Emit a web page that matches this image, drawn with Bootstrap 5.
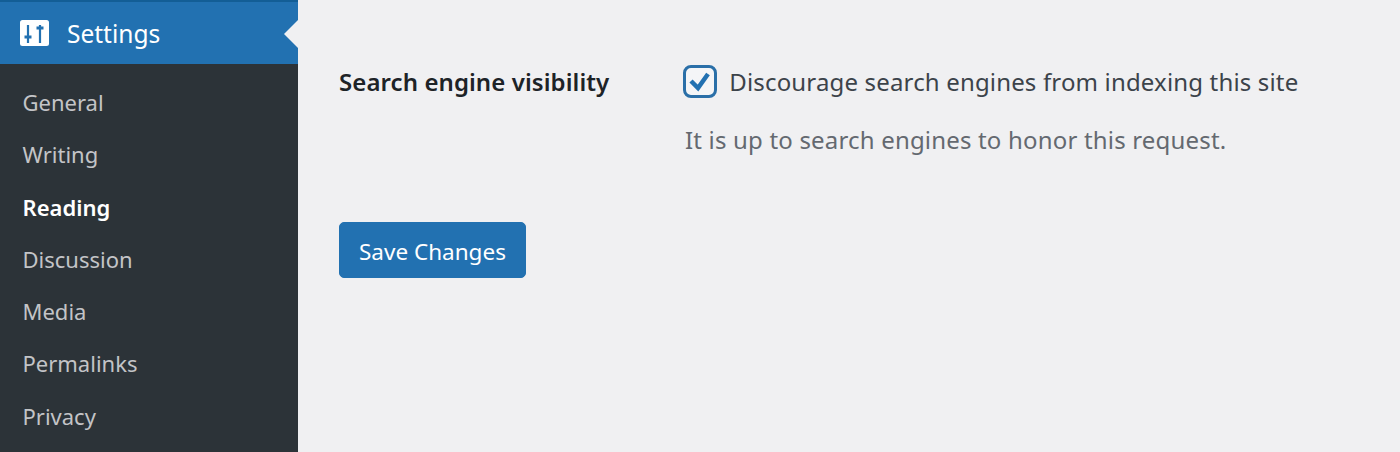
<!DOCTYPE html>
<html lang="en"><head><meta charset="utf-8"><title>Reading Settings</title>
<link href="https://cdn.jsdelivr.net/npm/bootstrap@5.3.0/dist/css/bootstrap.min.css" rel="stylesheet">
<style>
html,body{height:452px;overflow:hidden;margin:0}
body{background:#f0f0f2;font-family:"Noto Sans","Open Sans",sans-serif;color:#1d2327}
.wp-shell{height:452px}
.wp-side{width:298px;background:#2c3338;flex:none}
.wp-head{height:64px;background:#2271b1;border-top:2px solid #135e96;color:#fff;font-size:24.5px;padding:2px 0 0 20px;gap:18px;position:relative}
.wp-head svg{margin-top:-2px}
.wp-head::after{content:"";position:absolute;right:0;top:18px;border:14px solid transparent;border-left:0;border-right-color:#f0f0f2}
.wp-link{display:block;color:#c3c4c7;font-size:22px;line-height:32px;height:52.3px;padding:0 0 0 22.5px;text-decoration:none}
.wp-link.sel{color:#fff;font-weight:600}
.wp-menu{padding-top:22px}
.wp-main{padding:66px 0 0 41px}
.wp-label{width:344px;font-size:24px;font-weight:600;line-height:32px;letter-spacing:.08px}
.wp-check{width:33.5px;height:33px;border:3.5px solid #2a6fa8;border-radius:8px;background:#f4f5f7;flex:none;margin-top:-1px}
.wp-opt{font-size:24px;line-height:32px;gap:12.8px;letter-spacing:.16px;color:#3c434a}
.wp-desc{font-size:24px;line-height:32px;color:#646970;margin-top:26px;letter-spacing:.18px;padding-left:2px}
.wp-save{margin-top:66px;background:#2271b1;border:1px solid #2271b1;color:#fff;font-size:22.5px;line-height:32px;padding:13px 19px 9px;border-radius:5px}
</style></head><body>
<div class="d-flex wp-shell">
<nav class="wp-side">
<div class="wp-head d-flex align-items-center">
<svg width="29" height="26" viewBox="0 0 29 26"><rect width="29" height="26" rx="2.5" fill="#fff"/><path d="M8 5v18M20 5v18" stroke="#2271b1" stroke-width="2.2"/><path d="M4.5 17h7M16.5 8h7" stroke="#2271b1" stroke-width="3.2"/></svg>
<span>Settings</span></div>
<div class="wp-menu">
<a class="wp-link" href="#">General</a><a class="wp-link" href="#">Writing</a><a class="wp-link sel" href="#">Reading</a><a class="wp-link" href="#">Discussion</a><a class="wp-link" href="#">Media</a><a class="wp-link" href="#">Permalinks</a><a class="wp-link" href="#">Privacy</a>
</div></nav>
<main class="wp-main flex-grow-1">
<div class="d-flex">
<div class="wp-label">Search engine visibility</div>
<div>
<div class="d-flex align-items-center wp-opt"><span class="wp-check d-flex align-items-center justify-content-center"><svg width="25" height="25" viewBox="0 0 25 25" class="flex-shrink-0"><path d="M4 12l7 7L21 5" fill="none" stroke="#2271b1" stroke-width="4.5"/></svg></span><span>Discourage search engines from indexing this site</span></div>
<div class="wp-desc">It is up to search engines to honor this request.</div>
</div></div>
<button class="btn wp-save" type="button">Save Changes</button>
</main></div>
<script src="https://cdn.jsdelivr.net/npm/bootstrap@5.3.0/dist/js/bootstrap.bundle.min.js"></script>
</body></html>
